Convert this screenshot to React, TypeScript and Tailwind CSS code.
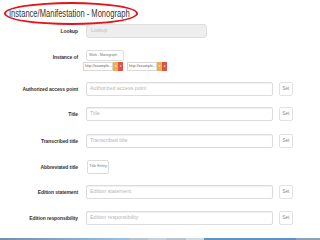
import React from 'react';

const font = { fontFamily: '"Liberation Sans", Arial, sans-serif' };

const Label: React.FC<{ text: string }> = ({ text }) => (
  <div className="w-[78px] shrink-0 text-right text-[5px] font-bold text-[#333] tracking-[-0.1px] leading-[14px]">
    {text}
  </div>
);

const TextRow: React.FC<{ label: string; placeholder: string; mt: string }> = ({ label, placeholder, mt }) => (
  <div className={`flex items-start ${mt}`}>
    <Label text={label} />
    <div className="ml-[8px] w-[187px] h-[14px] border border-[#dcdcdc] rounded-[2px] bg-white shadow-[inset_0_1px_1px_rgba(0,0,0,0.06)] flex items-center pl-[3px]">
      <span className="text-[5.3px] text-[#b5b5b5]">{placeholder}</span>
    </div>
    <div className="ml-[6px] w-[14px] h-[14px] border border-[#e2e2e2] rounded-[2px] bg-white flex items-center justify-center">
      <span className="text-[4.5px] text-[#888]">Set</span>
    </div>
  </div>
);

const Tag: React.FC = () => (
  <div className="flex items-stretch h-[9px]">
    <div className="w-[30px] border border-[#d8d8d8] bg-white flex items-center pl-[1px]">
      <span className="text-[3.8px] text-[#666] whitespace-nowrap">http://example...</span>
    </div>
    <div className="w-[5px] bg-[#f0ad4e] flex items-center justify-center text-[3.5px] text-white">x</div>
    <div className="w-[5px] bg-[#d9534f] flex items-center justify-center text-[3.5px] text-white">x</div>
  </div>
);

export default function App() {
  return (
    <div className="w-[320px] h-[240px] bg-white overflow-hidden flex flex-col" style={font}>
      {/* Header with red circle */}
      <div className="relative h-[24px] shrink-0">
        <div className="absolute left-[9px] top-[7px] origin-left scale-x-[0.72] whitespace-nowrap text-[10.5px] leading-[12px] text-[#333]">
          Instance/Manifestation - Monograph
        </div>
        <div className="absolute left-[4px] top-[2px] w-[134px] h-[23px] rounded-[50%] border-[2px] border-[#e3131b]" />
      </div>

      {/* Lookup */}
      <div className="flex items-start">
        <Label text="Lookup" />
        <div className="ml-[8px] w-[121px] h-[14px] border border-[#dedede] rounded-[3px] bg-[#eeeeee] flex items-center pl-[4px]">
          <span className="text-[5px] text-[#c0c0c0]">Lookup</span>
        </div>
      </div>

      {/* Instance of */}
      <div className="flex items-start mt-[12px]">
        <div className="w-[78px] shrink-0 text-right text-[5px] font-bold text-[#333] leading-[14px] tracking-[-0.1px]">Instance of</div>
        <div className="ml-[5px] flex flex-col">
          <div className="ml-[3px] w-[38px] h-[11px] border border-[#dcdcdc] rounded-[2px] bg-white flex items-center pl-[2px]">
            <span className="text-[3.6px] text-[#777] whitespace-nowrap tracking-[-0.1px]">Work - Monograph</span>
          </div>
          <div className="flex gap-[4px] mt-[1px]">
            <Tag />
            <Tag />
          </div>
        </div>
      </div>

      <TextRow label="Authorized access point" placeholder="Authorized access point" mt="mt-[11px]" />
      <TextRow label="Title" placeholder="Title" mt="mt-[11px]" />
      <TextRow label="Transcribed title" placeholder="Transcribed title" mt="mt-[13px]" />

      {/* Abbreviated title */}
      <div className="flex items-start mt-[12px]">
        <Label text="Abbreviated title" />
        <div className="ml-[9px] w-[22px] h-[14px] border border-[#dcdcdc] rounded-[2px] bg-white flex items-center justify-center">
          <span className="text-[3.8px] text-[#777] whitespace-nowrap">Title Entity</span>
        </div>
      </div>

      <TextRow label="Edition statement" placeholder="Edition statement" mt="mt-[11px]" />
      <TextRow label="Edition responsibility" placeholder="Edition responsibility" mt="mt-[12px]" />

      {/* taskbar strip */}
      <div className="mt-auto flex h-[2px]">
        <div className="w-[130px] bg-gradient-to-r from-[#6f8fae] to-[#9cc3e4]" />
        <div className="w-[18px] bg-[#b8c4cf]" />
        <div className="w-[18px] bg-[#c9d2da]" />
        <div className="w-[20px] bg-[#b8c4cf]" />
        <div className="w-[18px] bg-[#d2d9df]" />
        <div className="w-[92px] bg-[#5f93c2]" />
        <div className="flex-1 bg-[#8aa3b8]" />
      </div>
    </div>
  );
}
